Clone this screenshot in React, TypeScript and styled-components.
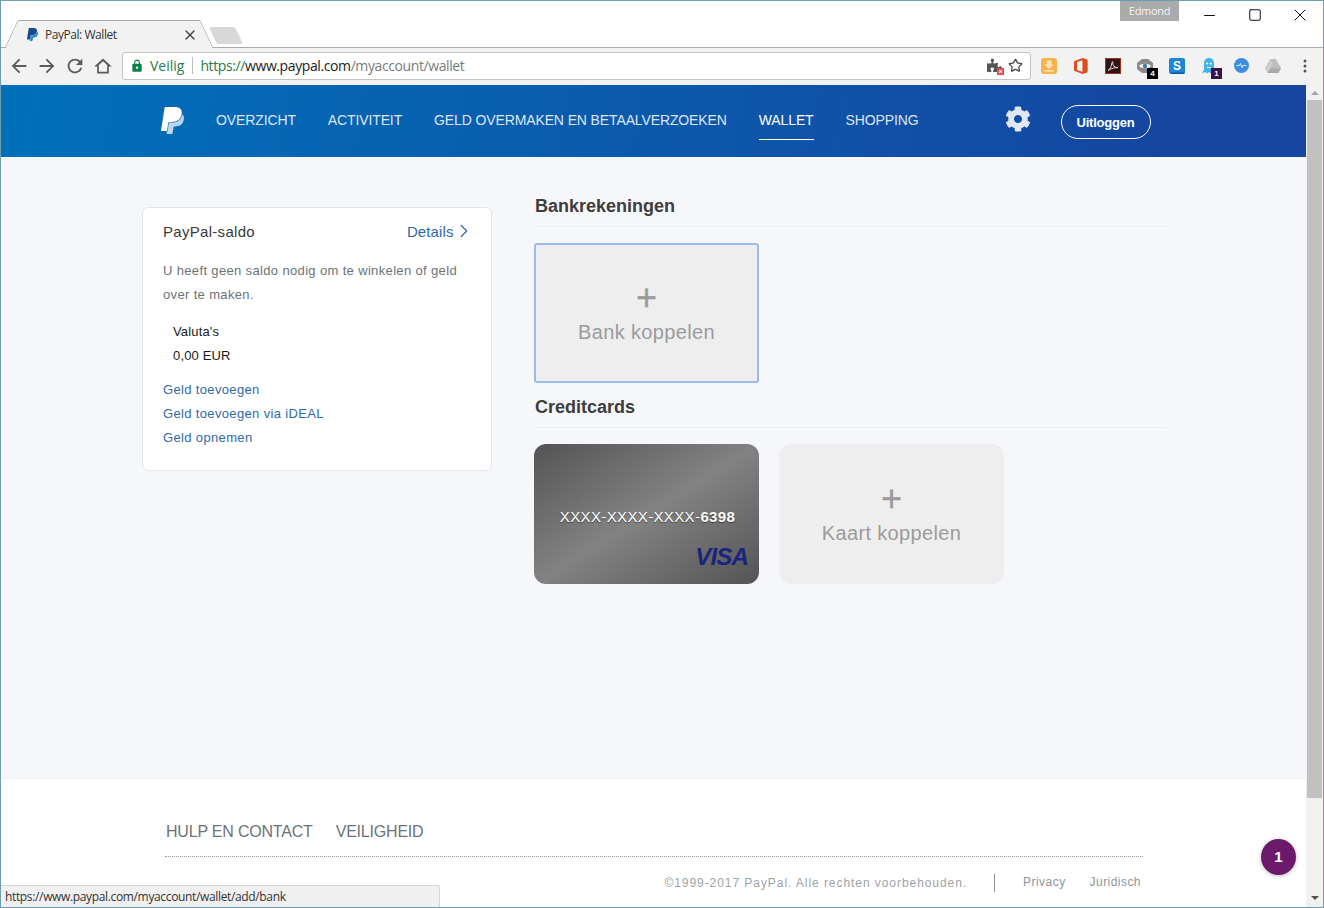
import React from 'react';
import styled, { createGlobalStyle } from 'styled-components';
import { Star, X, Minus, Square, ChevronRight } from 'lucide-react';
import { FaCog, FaPuzzlePiece } from 'react-icons/fa';
import { MdArrowBack, MdArrowForward, MdRefresh, MdLock } from 'react-icons/md';

const Global = createGlobalStyle`
  html, body { margin: 0; padding: 0; background: #fff; }
  #root { width: 1324px; height: 908px; overflow: hidden; }
  * { box-sizing: border-box; }
`;

const Win = styled.div`
  position: relative;
  width: 1324px;
  height: 908px;
  border: 1px solid #6f9cae;
  display: flex;
  flex-direction: column;
  overflow: hidden;
  background: #fff;
  font-family: "Liberation Sans", Arial, sans-serif;
`;

const TitleBar = styled.div`
  height: 47px;
  flex: none;
  display: flex;
  align-items: flex-start;
  background: #fff;
  border-bottom: 1px solid #a9acae;
`;

const Tab = styled.div`
  position: relative;
  margin: 19px 0 -1px 17px;
  width: 182px;
  height: 28px;
  background: #f2f2f2;
  border-top: 1px solid #a9acae;
  display: flex;
  align-items: center;
  padding: 0 0 0 8px;
  z-index: 1;
  &::before, &::after {
    content: '';
    position: absolute;
    top: -1px;
    bottom: 0;
    width: 16px;
    background: #f2f2f2;
    border-top: 1px solid #a9acae;
    z-index: -1;
  }
  &::before {
    left: -7px;
    transform: skewX(-25deg);
    border-left: 1px solid #a9acae;
    border-top-left-radius: 2px;
  }
  &::after {
    right: -7px;
    transform: skewX(25deg);
    border-right: 1px solid #a9acae;
    border-top-right-radius: 2px;
  }
`;

const TabTitle = styled.span`
  margin-left: 6px;
  flex: 1;
  font: 12px "Open Sans", sans-serif;
  letter-spacing: -0.45px;
  color: #333;
`;

const TabClose = styled.span`
  display: flex;
  margin-right: 2px;
  color: #444;
`;

const NewTab = styled.div`
  margin: 26px 0 0 13px;
  width: 26px;
  height: 17px;
  background: #d8d8d8;
  border-radius: 2px;
  transform: skewX(25deg);
`;

const Profile = styled.div`
  margin: -1px 0 0 auto;
  width: 59px;
  height: 21px;
  background: #ababab;
  color: #f4f4f4;
  text-align: center;
  font: 11px/22px "Open Sans", sans-serif;
  letter-spacing: -0.3px;
`;

const WinControls = styled.div`
  display: flex;
  padding: 0 1px 0 8px;
  color: #111;
`;

const WinBtn = styled.div`
  width: 45px;
  height: 28px;
  display: flex;
  align-items: center;
  justify-content: center;
`;

const Toolbar = styled.div`
  height: 37px;
  flex: none;
  display: flex;
  align-items: center;
  background: #f2f2f2;
  padding: 0 0 2px 4px;
`;

const NavIcon = styled.div`
  width: 28px;
  display: flex;
  justify-content: center;
  color: #5a5a5a;
`;

const Omnibox = styled.div`
  width: 909px;
  height: 28px;
  margin-left: 5px;
  background: #fff;
  border: 1px solid #c4c4c4;
  border-radius: 3px;
  display: flex;
  align-items: center;
  padding: 0 7px 0 7px;
  font: 14px "Open Sans", sans-serif;
`;

const Secure = styled.span`
  color: #2b7a4b;
  margin-left: 6px;
  padding-right: 8px;
  border-right: 1px solid #bbb;
  line-height: 17px;
`;

const Url = styled.span`
  margin-left: 7px;
  flex: 1;
  letter-spacing: -0.4px;
  color: #7b7b7b;
  b { font-weight: 400; color: #222; }
  i { font-style: normal; color: #2b7a4b; }
`;

const OmniIcons = styled.div`
  display: flex;
  align-items: center;
  gap: 6px;
  color: #444;
`;

const PuzzleWrap = styled.span`
  position: relative;
  display: flex;
  color: #555;
  &::after {
    content: '×';
    position: absolute;
    right: -2px;
    bottom: -2px;
    width: 7px;
    height: 7px;
    background: #e04b4b;
    color: #fff;
    font: bold 7px/7px "Liberation Sans", sans-serif;
    text-align: center;
  }
`;

const Extensions = styled.div`
  display: flex;
  align-items: center;
  margin-left: 2px;
`;

const Ext = styled.div`
  position: relative;
  width: 32px;
  height: 18px;
  display: flex;
  justify-content: center;
  align-items: center;
`;

const ExtBadge = styled.span<{ $bg: string }>`
  position: absolute;
  left: 18px;
  top: 11px;
  width: 11px;
  height: 11px;
  background: ${p => p.$bg};
  color: #fff;
  font: bold 8px/11px "Liberation Sans", sans-serif;
  text-align: center;
`;

const Body = styled.div`
  flex: 1;
  min-height: 0;
  display: flex;
`;

const Page = styled.div`
  width: 1305px;
  display: flex;
  flex-direction: column;
  background: #f5f7fa;
`;

const Header = styled.header`
  height: 72px;
  flex: none;
  display: flex;
  background: linear-gradient(100deg, #0070ba 0%, #1546a0 90%);
  padding-left: 158px;
`;

const Logo = styled.div`
  width: 57px;
  padding-top: 22px;
  display: flex;
  align-items: flex-start;
`;

const NavLink = styled.a<{ $on?: boolean }>`
  height: 55px;
  margin-right: 32px;
  padding-top: 26px;
  color: #fff;
  opacity: ${p => (p.$on ? 1 : 0.85)};
  font-size: 14px;
  line-height: 18px;
  letter-spacing: -0.12px;
  white-space: nowrap;
  border-bottom: ${p => (p.$on ? '1px solid #fff' : 'none')};
`;

const Gear = styled.div`
  margin: 21px 0 0 54px;
  color: #dfe7f3;
  display: flex;
  align-items: flex-start;
`;

const Logout = styled.button`
  margin: 20px 0 0 30px;
  width: 90px;
  height: 34px;
  border: 1px solid #fff;
  border-radius: 17px;
  background: transparent;
  color: #fff;
  font: bold 13px "Liberation Sans", sans-serif;
  letter-spacing: -0.2px;
  padding: 0;
`;

const Content = styled.main`
  flex: 1;
  display: flex;
  align-items: flex-start;
  gap: 42px;
  padding: 36px 0 0 141px;
`;

const SaldoCard = styled.section`
  width: 350px;
  height: 264px;
  margin-top: 14px;
  background: #fff;
  border: 1px solid #e3e5ea;
  border-radius: 6px;
  padding: 13px 20px 0;
`;

const CardHead = styled.div`
  display: flex;
  justify-content: space-between;
  align-items: center;
  height: 20px;
`;

const CardTitle = styled.h2`
  margin: 0;
  font-size: 15px;
  font-weight: 400;
  letter-spacing: 0.3px;
  color: #3a3a3a;
`;

const Details = styled.a`
  display: flex;
  align-items: center;
  font-size: 15px;
  letter-spacing: 0.1px;
  color: #2f6aa8;
  svg { margin: 0 -3.5px 0 -1px; }
`;

const Intro = styled.p`
  margin: 18px 0 0;
  font-size: 13px;
  line-height: 24px;
  letter-spacing: 0.35px;
  color: #6c7378;
`;

const Balance = styled.div`
  margin: 13px 0 0 10px;
  font-size: 13px;
  line-height: 24px;
  letter-spacing: 0.15px;
  color: #1a1a1a;
`;

const LinkList = styled.div`
  margin-top: 10px;
  display: flex;
  flex-direction: column;
`;

const CardLink = styled.a`
  font-size: 13px;
  line-height: 24px;
  letter-spacing: 0.35px;
  color: #2f6aa8;
`;

const Column = styled.div`
  width: 633px;
`;

const SectionTitle = styled.h3<{ $top?: number }>`
  margin: ${p => p.$top ?? 0}px 0 16px 1px;
  height: 34px;
  padding-top: 2px;
  font-size: 18px;
  line-height: 22px;
  font-weight: 700;
  color: #3f3c3c;
  border-bottom: 1px solid #eceef2;
`;

const Tiles = styled.div`
  display: flex;
  gap: 20px;
`;

const AddTile = styled.div<{ $focus?: boolean }>`
  width: 225px;
  height: 140px;
  background: #eeeeee;
  color: #9b9b9b;
  border-radius: ${p => (p.$focus ? '3px' : '12px')};
  border: ${p => (p.$focus ? '2px solid #9cbcec' : 'none')};
  display: flex;
  flex-direction: column;
  align-items: center;
  justify-content: center;
`;

const PlusMark = styled.span`
  font-size: 36px;
  line-height: 34px;
  height: 37px;
  -webkit-text-stroke: 0.4px #9b9b9b;
`;

const TileLabel = styled.span`
  font-size: 20px;
  line-height: 28px;
  letter-spacing: 0.35px;
`;

const CreditCard = styled.div`
  width: 225px;
  height: 140px;
  border-radius: 12px;
  background: linear-gradient(to bottom right, #545454 0%, #828282 50%, #545454 100%);
  display: flex;
  flex-direction: column;
  align-items: flex-end;
  padding: 64px 11px 0 0;
  color: #fff;
`;

const CardNumber = styled.div`
  align-self: center;
  margin-left: 13px;
  font-size: 15px;
  line-height: 18px;
  letter-spacing: 0.37px;
  white-space: nowrap;
  text-shadow: 0 1px 1px rgba(0, 0, 0, .45);
  b { font-weight: 700; }
`;

const Visa = styled.div`
  margin-top: 18px;
  font-size: 24px;
  line-height: 26px;
  font-weight: 700;
  font-style: italic;
  letter-spacing: -0.8px;
  color: #1a237e;
`;

const Footer = styled.footer`
  height: 129px;
  flex: none;
  background: #fff;
  padding: 44px 163px 0 164px;
  border-top: 1px solid #f1f2f4;
`;

const FootNav = styled.div`
  display: flex;
  gap: 23px;
  height: 34px;
  padding: 0 0 0 1px;
  border-bottom: 1px dotted #999;
  font-size: 16px;
  line-height: 18px;
  letter-spacing: -0.2px;
  color: #6c7378;
`;

const FootLegal = styled.div`
  display: flex;
  justify-content: flex-end;
  align-items: center;
  padding: 17px 2px 0 0;
  font-size: 12px;
  letter-spacing: 0.94px;
  color: #9da3a6;
`;

const LegalSep = styled.span`
  width: 1px;
  height: 18px;
  margin: 0 28px 0 27px;
  background: #9a8f8f;
`;

const LegalLink = styled.span`
  margin-right: 24px;
  margin-top: -3px;
  letter-spacing: 0.45px;
  color: #8f9599;
  &:last-child { margin-right: 0; }
`;

const Scrollbar = styled.div`
  width: 17px;
  background: #f1f1f1;
  display: flex;
  flex-direction: column;
  align-items: center;
`;

const ScrollArrow = styled.div<{ $down?: boolean }>`
  width: 0;
  height: 0;
  margin: ${p => (p.$down ? '5px 0 0' : '6px 0 5px')};
  border-left: 4px solid transparent;
  border-right: 4px solid transparent;
  border-bottom: ${p => (p.$down ? '0' : '4px solid #a3a3a3')};
  border-top: ${p => (p.$down ? '4px solid #505050' : '0')};
`;

const Thumb = styled.div`
  width: 15px;
  height: 698px;
  margin: 0 0 93px;
  background: #c1c1c1;
`;

const StatusBubble = styled.div`
  position: absolute;
  left: 0;
  bottom: 0;
  width: 439px;
  height: 22px;
  background: #f0f0f0;
  border-top: 1px solid #d6d6d6;
  border-right: 1px solid #d6d6d6;
  border-top-right-radius: 3px;
  padding-left: 4px;
  font: 12px/21px "Open Sans", sans-serif;
  letter-spacing: -0.35px;
  color: #333;
`;

const ChatBadge = styled.div`
  position: absolute;
  left: 1260px;
  top: 838px;
  width: 35px;
  height: 36px;
  border-radius: 50%;
  background: #6b1a6b;
  box-shadow: 0 1px 4px rgba(0,0,0,.25);
  color: #fff;
  font: bold 15px/36px "Liberation Sans", sans-serif;
  text-align: center;
`;

const PP_FRONT = 'M7.076 21.337H2.47a.641.641 0 0 1-.633-.74L4.944.901C5.026.382 5.474 0 5.998 0h7.46c2.57 0 4.578.543 5.69 1.81 1.01 1.15 1.304 2.42 1.012 4.287-.023.143-.047.288-.077.437-.983 5.05-4.349 6.797-8.647 6.797h-2.19c-.524 0-.968.382-1.05.9l-1.12 7.106z';
const PP_BACK = 'M21.222 6.917a3.35 3.35 0 0 0-.607-.541c-.013.076-.026.175-.041.254-.93 4.778-4.005 7.201-9.138 7.201h-2.19a.563.563 0 0 0-.556.479l-1.187 7.527h-.506l-.24 1.516a.56.56 0 0 0 .554.647h3.882c.46 0 .85-.334.922-.788.06-.26.76-4.852.816-5.09a.932.932 0 0 1 .923-.788h.58c3.76 0 6.705-1.528 7.565-5.946.36-1.847.174-3.388-.777-4.471z';

const PayPalMark = ({ size, front, back }: { size: number; front: string; back: string }) => (
  <svg width={size} height={size} viewBox="0 0 24 24">
    <path d={PP_BACK} fill={back} />
    <path d={PP_FRONT} fill={front} />
  </svg>
);

const HomeGlyph = () => (
  <svg width="20" height="20" viewBox="0 0 24 24" fill="currentColor" fillRule="evenodd">
    <path d="M12 3 1.500 12.500H5V21h14v-8.500h3.500zM12 6.300l5 4.500V19H7v-8.200z" />
  </svg>
);

const extensions: { key: string; badge?: string; badgeBg?: string; icon: React.ReactNode }[] = [
  { key: 'save', icon: (
    <svg width="16" height="16" viewBox="0 0 16 16">
      <rect width="16" height="16" rx="3" fill="#f9b24a" />
      <path d="M5.500 2.500h5v4h2.500L8 11 3 6.500h2.500z" fill="#fde3b5" />
      <rect x="3" y="12" width="10" height="1.600" fill="#fde3b5" />
    </svg>
  ) },
  { key: 'office', icon: (
    <svg width="14" height="16" viewBox="0 0 14 16">
      <path d="M0 3.200 8.600 0 13.500 1.500v13L8.600 16 0 12.800zM8.600 2.200 3 4v8l5.600 1.800z" fill="#dc4e1e" />
      <path d="M8.600 2.200v11.600l4.900-1V3z" fill="#dc4e1e" opacity=".75" />
    </svg>
  ) },
  { key: 'acrobat', icon: (
    <svg width="16" height="16" viewBox="0 0 16 16">
      <rect x=".5" y=".5" width="15" height="15" fill="#2c1512" stroke="#a5301f" />
      <path d="M3 12.500c2-1 3.500-4 4-8 .2-1.500 1-1 .8.5-.3 2.500 2 4.500 5 4.700-3-.3-6 .5-9.800 2.800z" fill="none" stroke="#e8d9d6" strokeWidth="1" />
    </svg>
  ) },
  { key: 'eye', badge: '4', badgeBg: '#000', icon: (
    <svg width="16" height="16" viewBox="0 0 16 16">
      <path d="M5 1h6l5 4v6l-5 4H5L0 11V5z" fill="#8a8a8a" />
      <path d="M2 8c2-3 10-3 12 0-2 3-10 3-12 0z" fill="#f5f5f5" />
      <circle cx="8" cy="8" r="2.200" fill="#4a7f9c" />
    </svg>
  ) },
  { key: 'skype', icon: (
    <svg width="16" height="16" viewBox="0 0 16 16">
      <rect width="16" height="16" rx="2" fill="#1b87d6" />
      <path d="M16 14a2 2 0 0 1-2 2H2v-1.500h14z" fill="#0f5a94" />
      <text x="8" y="12" textAnchor="middle" fontFamily="Liberation Sans" fontWeight="700" fontSize="12" fill="#fff">S</text>
    </svg>
  ) },
  { key: 'ghost', badge: '1', badgeBg: '#3d0f4a', icon: (
    <svg width="14" height="16" viewBox="0 0 14 16">
      <path d="M7 0c3 0 5 2.200 5 5.500V12l2 2.500c-1.500.5-2.500 0-3.300-.7L9 15.500 7 14l-2 1.500-1.700-1.700c-.8.7-1.800 1.200-3.300.7L2 12V5.500C2 2.200 4 0 7 0z" fill="#3fb4e3" />
      <circle cx="5.200" cy="5.500" r="1.100" fill="#fff" />
      <circle cx="8.800" cy="5.500" r="1.100" fill="#fff" />
      <path d="M5 9c1 1 3 1 4 0" stroke="#fff" fill="none" />
    </svg>
  ) },
  { key: 'pulse', icon: (
    <svg width="15" height="15" viewBox="0 0 15 15">
      <circle cx="7.500" cy="7.500" r="7.500" fill="#3b8fde" />
      <path d="M2.500 7.500h3l1-2 1.500 4 1-2h3.500" stroke="#d8ecfb" fill="none" />
    </svg>
  ) },
  { key: 'drive', icon: (
    <svg width="16" height="14" viewBox="0 0 16 14">
      <path d="M5.300 0h5.400L16 9l-2.700 5H2.700L0 9z" fill="#bdbdbd" />
      <path d="M5.300 0 8 4.700 2.700 14 0 9z" fill="#cdcdcd" />
      <path d="M2.700 14 5.300 9.500H16L13.300 14z" fill="#a9a9a9" />
    </svg>
  ) },
  { key: 'menu', icon: (
    <svg width="4" height="14" viewBox="0 0 4 14">
      <circle cx="2" cy="2" r="1.500" fill="#555" />
      <circle cx="2" cy="7" r="1.500" fill="#555" />
      <circle cx="2" cy="12" r="1.500" fill="#555" />
    </svg>
  ) },
];

const navItems = ['OVERZICHT', 'ACTIVITEIT', 'GELD OVERMAKEN EN BETAALVERZOEKEN', 'WALLET', 'SHOPPING'];

export default function App() {
  return (
    <>
      <Global />
      <Win>
        <TitleBar>
          <Tab>
            <PayPalMark size={13} front="#17478f" back="#1f8ad0" />
            <TabTitle>PayPal: Wallet</TabTitle>
            <TabClose><X size={16} strokeWidth={2} /></TabClose>
          </Tab>
          <NewTab />
          <Profile>Edmond</Profile>
          <WinControls>
            <WinBtn><Minus size={17} strokeWidth={1} absoluteStrokeWidth /></WinBtn>
            <WinBtn><Square size={14} strokeWidth={1} absoluteStrokeWidth /></WinBtn>
            <WinBtn><X size={20} strokeWidth={1} absoluteStrokeWidth /></WinBtn>
          </WinControls>
        </TitleBar>
        <Toolbar>
          <NavIcon><MdArrowBack size={22} /></NavIcon>
          <NavIcon><MdArrowForward size={22} /></NavIcon>
          <NavIcon><MdRefresh size={22} /></NavIcon>
          <NavIcon><HomeGlyph /></NavIcon>
          <Omnibox>
            <MdLock size={14} color="#0b8043" />
            <Secure>Veilig</Secure>
            <Url><i>https://</i><b>www.paypal.com</b>/myaccount/wallet</Url>
            <OmniIcons>
              <PuzzleWrap><FaPuzzlePiece size={15} /></PuzzleWrap>
              <Star size={15} strokeWidth={2} />
            </OmniIcons>
          </Omnibox>
          <Extensions>
            {extensions.map(e => (
              <Ext key={e.key}>
                {e.icon}
                {e.badge && <ExtBadge $bg={e.badgeBg!}>{e.badge}</ExtBadge>}
              </Ext>
            ))}
          </Extensions>
        </Toolbar>
        <Body>
          <Page>
            <Header>
              <Logo><PayPalMark size={27} front="#ffffff" back="#b9d4ee" /></Logo>
              {navItems.map(n => <NavLink key={n} $on={n === 'WALLET'}>{n}</NavLink>)}
              <Gear><FaCog size={26} /></Gear>
              <Logout>Uitloggen</Logout>
            </Header>
            <Content>
              <SaldoCard>
                <CardHead>
                  <CardTitle>PayPal-saldo</CardTitle>
                  <Details>Details<ChevronRight size={22} strokeWidth={1.3} /></Details>
                </CardHead>
                <Intro>U heeft geen saldo nodig om te winkelen of geld over te maken.</Intro>
                <Balance>Valuta's<br />0,00 EUR</Balance>
                <LinkList>
                  <CardLink>Geld toevoegen</CardLink>
                  <CardLink>Geld toevoegen via iDEAL</CardLink>
                  <CardLink>Geld opnemen</CardLink>
                </LinkList>
              </SaldoCard>
              <Column>
                <SectionTitle>Bankrekeningen</SectionTitle>
                <Tiles>
                  <AddTile $focus>
                    <PlusMark>+</PlusMark>
                    <TileLabel>Bank koppelen</TileLabel>
                  </AddTile>
                </Tiles>
                <SectionTitle $top={11}>Creditcards</SectionTitle>
                <Tiles>
                  <CreditCard>
                    <CardNumber>XXXX-XXXX-XXXX-<b>6398</b></CardNumber>
                    <Visa>VISA</Visa>
                  </CreditCard>
                  <AddTile>
                    <PlusMark>+</PlusMark>
                    <TileLabel>Kaart koppelen</TileLabel>
                  </AddTile>
                </Tiles>
              </Column>
            </Content>
            <Footer>
              <FootNav>
                <span>HULP EN CONTACT</span>
                <span>VEILIGHEID</span>
              </FootNav>
              <FootLegal>
                <span>©1999-2017 PayPal. Alle rechten voorbehouden.</span>
                <LegalSep />
                <LegalLink>Privacy</LegalLink>
                <LegalLink>Juridisch</LegalLink>
              </FootLegal>
            </Footer>
          </Page>
          <Scrollbar>
            <ScrollArrow />
            <Thumb />
            <ScrollArrow $down />
          </Scrollbar>
        </Body>
        <StatusBubble>https://www.paypal.com/myaccount/wallet/add/bank</StatusBubble>
        <ChatBadge>1</ChatBadge>
      </Win>
    </>
  );
}
